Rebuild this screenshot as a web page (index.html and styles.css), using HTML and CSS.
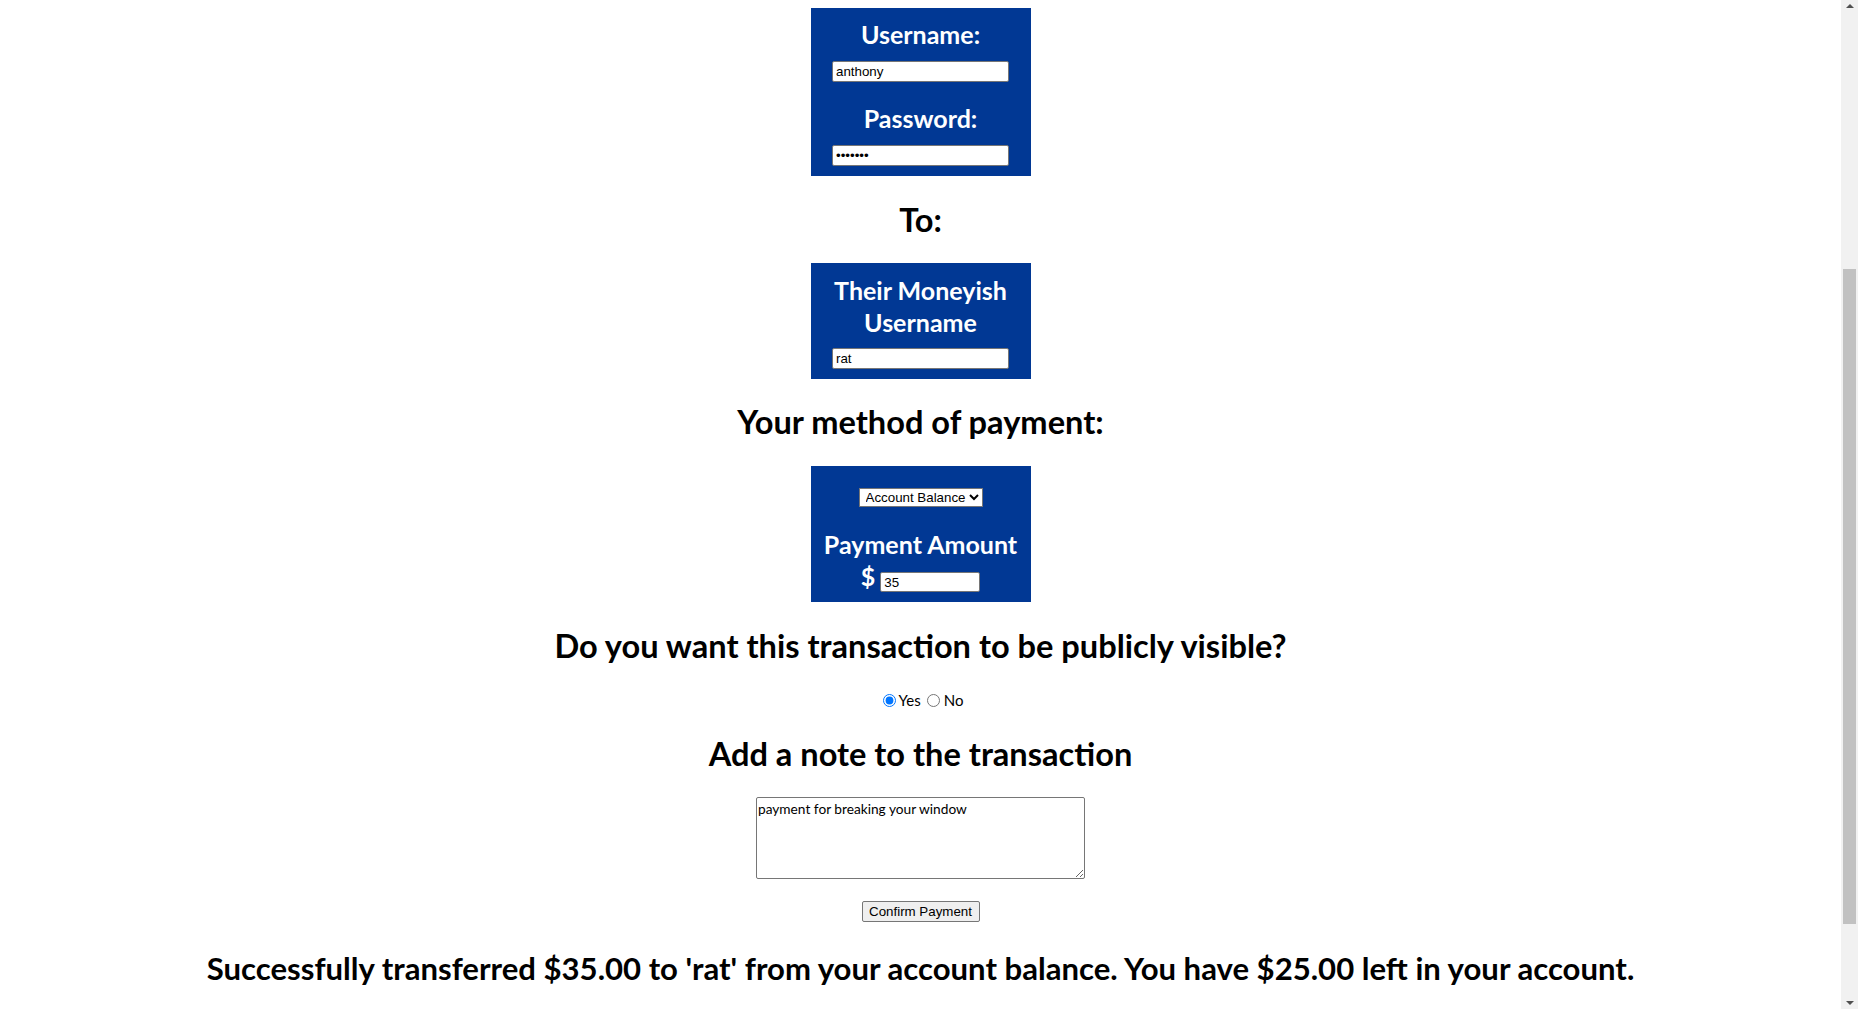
FILE: index.html
```html
<!DOCTYPE html>
<html lang="en">
<head>
<meta charset="utf-8">
<title>Moneyish - Send Payment</title>
<link rel="stylesheet" href="styles.css">
</head>
<body>
<main class="page">
  <form class="box box-login">
    <label class="box-label" for="username">Username:</label>
    <input class="field" id="username" type="text" value="anthony">
    <label class="box-label label-next" for="password">Password:</label>
    <input class="field" id="password" type="password" value="1234567">
  </form>

  <h2 class="heading heading-first">To:</h2>

  <div class="box box-recipient">
    <label class="box-label" for="recipient">Their Moneyish Username</label>
    <input class="field field-recipient" id="recipient" type="text" value="rat">
  </div>

  <h2 class="heading">Your method of payment:</h2>

  <div class="box box-method">
    <select class="method" aria-label="Payment method">
      <option>Account Balance</option>
      <option>Card</option>
    </select>
    <label class="box-label label-amount" for="amount">Payment Amount</label>
    <div class="amount-row">
      <span class="dollar">$</span>
      <input class="field amount" id="amount" type="text" value="35">
    </div>
  </div>

  <h2 class="heading heading-gap">Do you want this transaction to be publicly visible?</h2>

  <div class="visibility">
    <input class="radio radio-first" type="radio" name="public" id="public-yes" checked>
    <label class="radio-label" for="public-yes">Yes</label>
    <input class="radio radio-second" type="radio" name="public" id="public-no">
    <label class="radio-label" for="public-no">No</label>
  </div>

  <h2 class="heading heading-gap">Add a note to the transaction</h2>

  <textarea class="note" aria-label="Note">payment for breaking your window</textarea>

  <button class="confirm" type="button">Confirm Payment</button>

  <h2 class="result">Successfully transferred $35.00 to 'rat' from your account balance. You have $25.00 left in your account.</h2>
</main>

<div class="scrollbar" aria-hidden="true">
  <span class="scroll-arrow scroll-up"></span>
  <div class="scroll-track"><span class="scroll-thumb"></span></div>
  <span class="scroll-arrow scroll-down"></span>
</div>
</body>
</html>
```

FILE: styles.css
```css
html {
  background: #ffffff;
}

body {
  margin: 8px 25px 8px 8px;
  font-family: "Lato", "Liberation Sans", sans-serif;
  color: #000000;
}

.page {
  display: flex;
  flex-direction: column;
  align-items: center;
}

/* blue panels */
.box {
  box-sizing: border-box;
  width: 220px;
  padding: 0 10px;
  background: #013894;
  display: flex;
  flex-direction: column;
  align-items: center;
  margin: 0;
}

.box-login {
  padding-top: 10px;
  padding-bottom: 10px;
}

.box-recipient {
  margin-top: 23px;
  padding-top: 11px;
  padding-bottom: 10px;
}

.box-method {
  margin-top: 24px;
  padding-top: 22px;
  padding-bottom: 10px;
}

.box-label {
  display: block;
  color: #ffffff;
  font-family: "Lato", sans-serif;
  font-weight: 700;
  font-size: 25px;
  line-height: 32px;
  text-align: center;
}

.label-next {
  margin-top: 20px;
}

.label-amount {
  margin-top: 21px;
  white-space: nowrap;
}

.field {
  box-sizing: border-box;
  width: 177px;
  height: 21px;
  margin: 11px 0 0;
  padding: 1px 3px;
  border: 1px solid #767676;
  border-radius: 2px;
  background: #ffffff;
  color: #000000;
  font-family: "Liberation Sans", Arial, sans-serif;
  font-size: 13.33px;
}

.field-recipient {
  margin-top: 10px;
}

.method {
  box-sizing: border-box;
  width: 124px;
  height: 19px;
  margin: 0;
  padding: 0 0 0 2px;
  border: 1px solid #767676;
  border-radius: 0;
  background: #ffffff;
  color: #000000;
  font-family: "Liberation Sans", Arial, sans-serif;
  font-size: 13.33px;
}

.amount-row {
  display: flex;
  align-items: flex-start;
  gap: 5px;
  height: 20px;
  margin-top: 12px;
}

.dollar {
  color: #ffffff;
  font-weight: 700;
  font-size: 25px;
  line-height: 20px;
  margin-top: -6px;
}

.amount {
  width: 100px;
  height: 20px;
  margin: 0;
}

/* headings */
.heading {
  margin: 23px 0 0;
  font-family: "Lato", sans-serif;
  font-weight: 700;
  font-size: 32.6px;
  line-height: 40px;
  text-align: center;
}

.heading-first {
  margin-top: 24px;
}

.heading-gap {
  margin-top: 24px;
}

/* radio row */
.visibility {
  display: flex;
  align-items: center;
  height: 20px;
  margin-top: 24px;
  font-family: "Lato", sans-serif;
  font-size: 15px;
  line-height: 16px;
}

.radio {
  width: 13px;
  height: 13px;
  margin: 0 3px 0 0;
}

.radio-first {
  margin-left: 5px;
}

.radio-second {
  margin-left: 6px;
  margin-right: 4px;
}

.radio-label {
  color: #000000;
}

/* note */
.note {
  box-sizing: border-box;
  display: block;
  width: 329px;
  height: 82px;
  margin: 23px 0 0;
  padding: 2px 1px;
  border: 1px solid #767676;
  border-radius: 2px;
  font-family: "Lato", sans-serif;
  font-size: 13.7px;
  color: #000000;
  background: #ffffff;
}

.confirm {
  box-sizing: border-box;
  width: 118px;
  height: 21px;
  margin: 22px 0 0;
  padding: 1px 6px;
  border: 1px solid #767676;
  border-radius: 2px;
  background: #efefef;
  color: #000000;
  font-family: "Liberation Sans", Arial, sans-serif;
  font-size: 13.33px;
}

.result {
  margin: 26px 0 0;
  font-family: "Lato", sans-serif;
  font-weight: 700;
  font-size: 31.1px;
  line-height: 40px;
  text-align: center;
  white-space: nowrap;
}

/* browser-style vertical scrollbar drawn at the right edge */
.scrollbar {
  position: fixed;
  top: 0;
  right: 0;
  bottom: 0;
  width: 17px;
  background: #f1f1f1;
  display: flex;
  flex-direction: column;
}

.scroll-arrow {
  height: 17px;
  flex: none;
  display: flex;
  align-items: center;
  justify-content: center;
}

.scroll-arrow::before {
  content: "";
  width: 0;
  height: 0;
  border-left: 4px solid transparent;
  border-right: 4px solid transparent;
}

.scroll-up::before {
  border-bottom: 4px solid #505050;
  margin-top: -5px;
}

.scroll-down::before {
  border-top: 4px solid #505050;
  margin-top: 5px;
}

.scroll-track {
  flex: 1;
  display: flex;
  flex-direction: column;
  padding: 252px 2px 0;
}

.scroll-thumb {
  display: block;
  height: 655px;
  background: #c1c1c1;
}
```
